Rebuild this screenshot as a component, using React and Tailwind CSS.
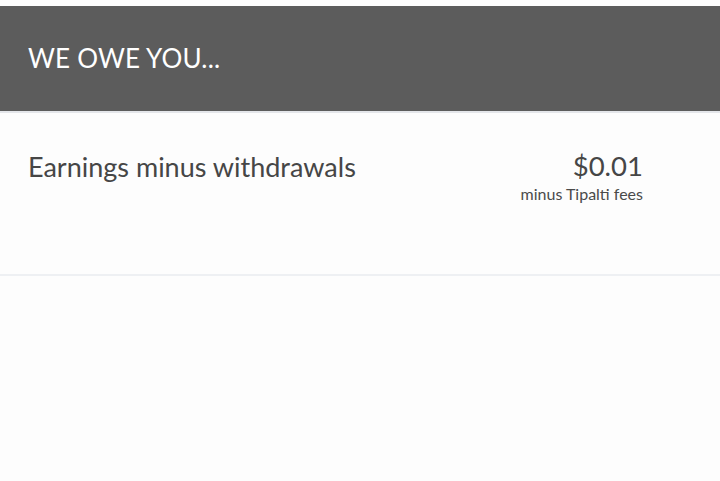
export default function App() {
  return (
    <div className="min-h-[481px] bg-[#fdfdfd] pt-[6px] font-['Lato','Liberation_Sans',sans-serif]">
      <div className="h-[107px] bg-[#5c5c5c] border-b-2 border-[#e4e6ea] flex items-center px-7">
        <h1 className="text-[26px] text-white tracking-[0.2px] pb-[1px]">WE OWE YOU...</h1>
      </div>
      <div className="h-[163px] flex items-start justify-between pl-7 pr-[77px] pt-[40px] border-b-2 border-[#eef0f3]">
        <span className="text-[27px] text-[#464646] leading-none">Earnings minus withdrawals</span>
        <div className="flex flex-col items-end -mt-[1px]">
          <span className="text-[27.5px] text-[#464646] leading-none">$0.01</span>
          <span className="text-[16px] text-[#4a4a4a] mt-[6px] leading-none">minus Tipalti fees</span>
        </div>
      </div>
    </div>
  )
}
